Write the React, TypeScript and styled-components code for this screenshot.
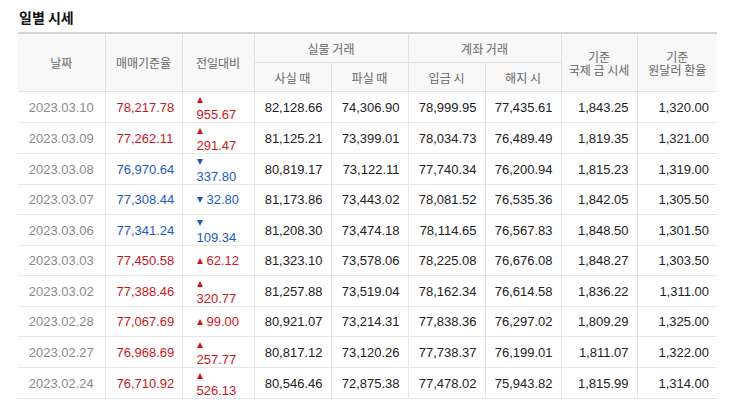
import React from 'react';
import styled, { createGlobalStyle } from 'styled-components';

const Global = createGlobalStyle`
  body { margin: 0; background: #fff; font-family: "Noto Sans CJK KR", "Liberation Sans", sans-serif; }
`;

const Page = styled.div`
  padding: 9px 26px 0 18px;
`;

const Title = styled.h3`
  margin: 0 0 7px 1px;
  font-size: 14px;
  font-weight: 700;
  color: #111;
  line-height: 16px;
`;

const Table = styled.table`
  width: 699px;
  border-collapse: collapse;
  table-layout: fixed;
  border-top: 2px solid #d4d4d4;
`;

const Th = styled.th`
  background: #f8f8f8;
  color: #666;
  font-size: 12px;
  font-weight: 400;
  height: 28px;
  padding: 0;
  border: 1px solid #e2e2e2;
  border-top: none;
  line-height: 13px;
  &:first-child { border-left: none; }
  &:last-child { border-right: none; }
`;

const Td = styled.td<{ $align?: string; $color?: string; $pad?: number }>`
  height: 29px;
  padding: 0 8px 0 ${({ $pad }) => $pad ?? 8}px;
  font-family: "Liberation Sans", "Noto Sans CJK KR", sans-serif;
  font-size: 13px;
  color: ${({ $color }) => $color || '#222'};
  text-align: ${({ $align }) => $align || 'right'};
  border: 1px solid #e6e6e6;
  &:first-child { border-left: none; }
  &:last-child { border-right: none; }
`;

const Arrow = styled.span<{ $up: boolean }>`
  display: inline-block;
  width: 0; height: 0;
  border-left: 3.5px solid transparent;
  border-right: 3.5px solid transparent;
  ${({ $up }) => $up ? 'border-bottom: 6px solid #c8181e;' : 'border-top: 6px solid #1d5bbf;'}
  margin-right: 4px;
  vertical-align: 1px;
`;

const rows: [string, string, number, string, string, string, string, string, string][] = [
  ['2023.03.10', '78,217.78', 1, '955.67', '82,128.66', '74,306.90', '78,999.95', '77,435.61', '1,843.25|1,320.00'],
  ['2023.03.09', '77,262.11', 1, '291.47', '81,125.21', '73,399.01', '78,034.73', '76,489.49', '1,819.35|1,321.00'],
  ['2023.03.08', '76,970.64', -1, '337.80', '80,819.17', '73,122.11', '77,740.34', '76,200.94', '1,815.23|1,319.00'],
  ['2023.03.07', '77,308.44', -1, '32.80', '81,173.86', '73,443.02', '78,081.52', '76,535.36', '1,842.05|1,305.50'],
  ['2023.03.06', '77,341.24', -1, '109.34', '81,208.30', '73,474.18', '78,114.65', '76,567.83', '1,848.50|1,301.50'],
  ['2023.03.03', '77,450.58', 1, '62.12', '81,323.10', '73,578.06', '78,225.08', '76,676.08', '1,848.27|1,303.50'],
  ['2023.03.02', '77,388.46', 1, '320.77', '81,257.88', '73,519.04', '78,162.34', '76,614.58', '1,836.22|1,311.00'],
  ['2023.02.28', '77,067.69', 1, '99.00', '80,921.07', '73,214.31', '77,838.36', '76,297.02', '1,809.29|1,325.00'],
  ['2023.02.27', '76,968.69', 1, '257.77', '80,817.12', '73,120.26', '77,738.37', '76,199.01', '1,811.07|1,322.00'],
  ['2023.02.24', '76,710.92', 1, '526.13', '80,546.46', '72,875.38', '77,478.02', '75,943.82', '1,815.99|1,314.00'],
];

const widths = [87, 77, 72, 77, 77, 77, 76, 76, 80];

export default function App() {
  return (
    <Page>
      <Global />
      <Title>일별 시세</Title>
      <Table>
        <colgroup>{widths.map((w, i) => <col key={i} style={{ width: w }} />)}</colgroup>
        <thead>
          <tr>
            <Th rowSpan={2}>날짜</Th>
            <Th rowSpan={2}>매매기준율</Th>
            <Th rowSpan={2}>전일대비</Th>
            <Th colSpan={2}>실물 거래</Th>
            <Th colSpan={2}>계좌 거래</Th>
            <Th rowSpan={2}>기준<br />국제 금 시세</Th>
            <Th rowSpan={2}>기준<br />원달러 환율</Th>
          </tr>
          <tr>
            <Th>사실 때</Th>
            <Th>파실 때</Th>
            <Th>입금 시</Th>
            <Th>해지 시</Th>
          </tr>
        </thead>
        <tbody>
          {rows.map(r => {
            const up = r[2] > 0;
            const c = up ? '#c8181e' : '#1d5bbf';
            const [gold, usd] = r[8].split('|');
            return (
              <tr key={r[0]}>
                <Td $align="center" $color="#8a8a8a">{r[0]}</Td>
                <Td $align="left" $pad={11} $color={c}>{r[1]}</Td>
                <Td $align="left" $pad={14} $color={c}><Arrow $up={up} />{r[3]}</Td>
                <Td>{r[4]}</Td>
                <Td>{r[5]}</Td>
                <Td>{r[6]}</Td>
                <Td>{r[7]}</Td>
                <Td>{gold}</Td>
                <Td>{usd}</Td>
              </tr>
            );
          })}
        </tbody>
      </Table>
    </Page>
  );
}
